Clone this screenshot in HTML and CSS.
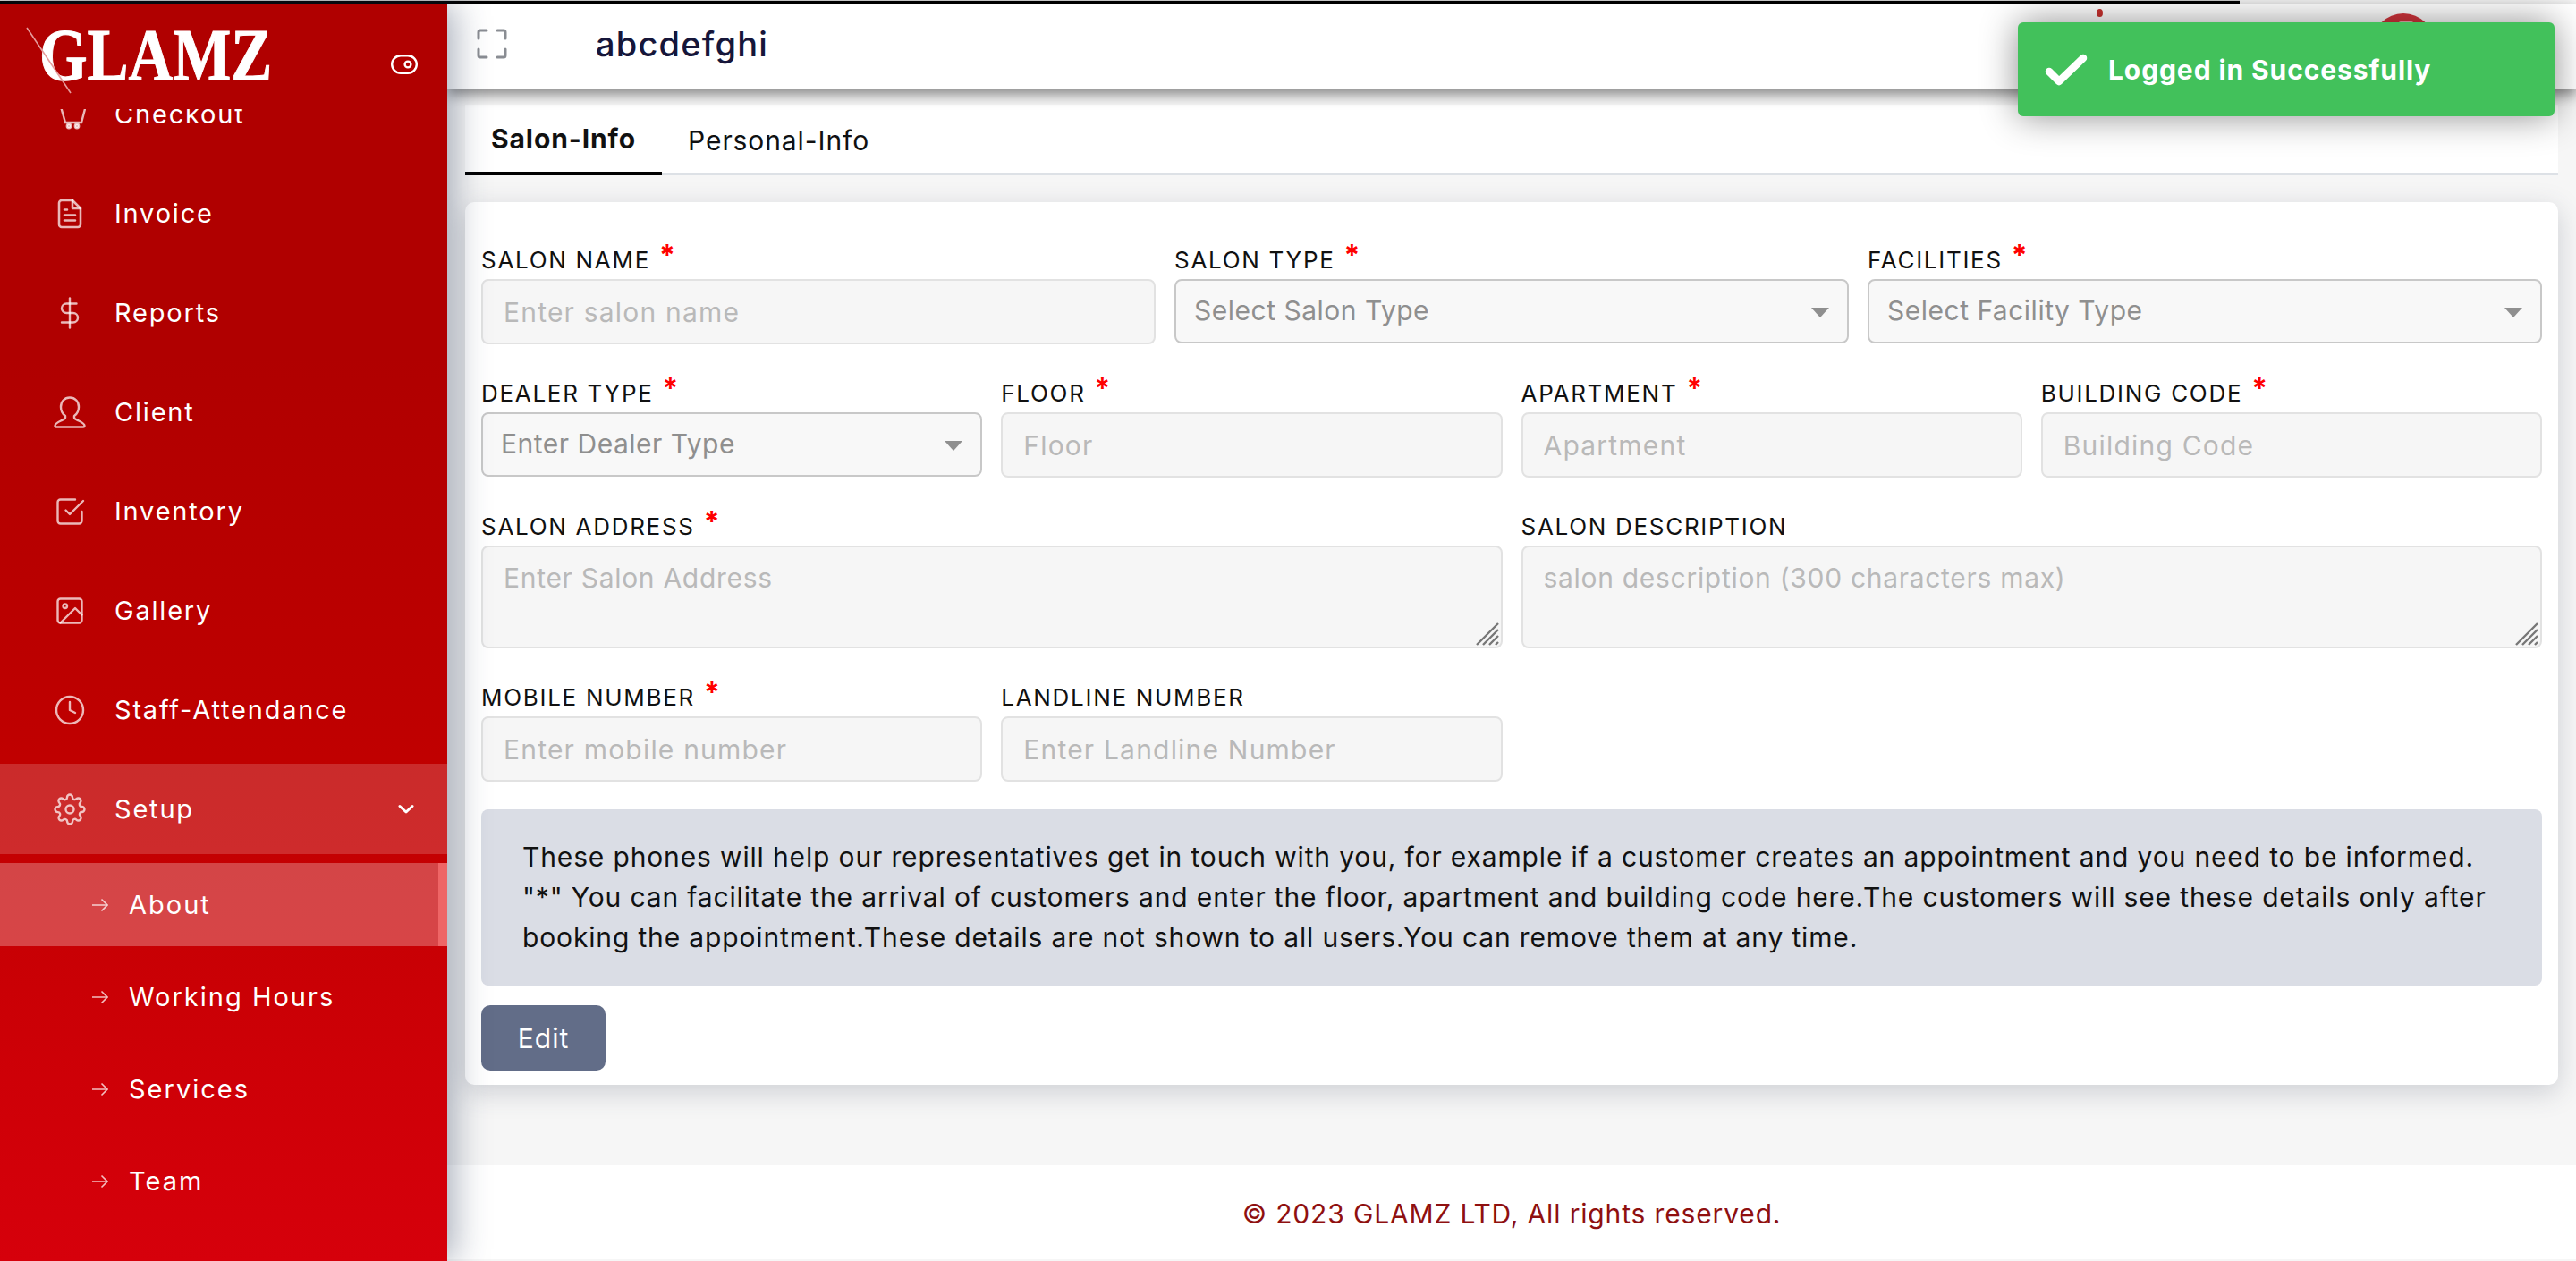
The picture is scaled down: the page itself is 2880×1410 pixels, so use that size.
FILE: index.html
```html
<!DOCTYPE html>
<html lang="en">
<head>
    <meta charset="UTF-8">
    <meta name="viewport" content="width=device-width, initial-scale=1.0">
    <title>Glamz - About</title>
    <link rel="stylesheet" href="styles.css">
</head>
<body>
    <div class="topline"></div>
    <div class="page">
        <aside class="sidebar">
            <div class="brand">
                <div class="logo">
                    <span class="logo-text">GLAMZ</span>
                    <svg class="logo-slash" width="60" height="80" viewBox="0 0 60 80"><path d="M1 1 L50 74" fill="none" stroke="#e59c9c" stroke-width="1.6"/></svg>
                </div>
                <svg class="toggle" width="30" height="22" viewBox="0 0 30 22" fill="none" stroke="#fff" stroke-width="2.4"><rect x="1.2" y="1.2" width="27.6" height="19.6" rx="9.8"/><circle cx="19" cy="11" r="3.4"/></svg>
            </div>
            <nav class="nav">
                <a class="nav-item">
                    <svg class="nav-icon" width="36" height="36" viewBox="0 0 36 36" fill="none" stroke="currentColor" stroke-width="2.4"><path d="M7.6 8 L13 27 H31 L36 8"/><circle cx="17" cy="31" r="2.2" fill="currentColor"/><circle cx="26" cy="31" r="2.2" fill="currentColor"/></svg>
                    <span>Checkout</span>
                </a>
                <a class="nav-item">
                    <svg class="nav-icon" width="36" height="36" viewBox="0 0 24 24" fill="none" stroke="currentColor" stroke-width="1.7" stroke-linecap="round" stroke-linejoin="round"><path d="M14 2H6a2 2 0 0 0-2 2v16a2 2 0 0 0 2 2h12a2 2 0 0 0 2-2V8z"/><path d="M14 2v6h6"/><path d="M16 13H8M16 17H8M10 9H8"/></svg>
                    <span>Invoice</span>
                </a>
                <a class="nav-item">
                    <svg class="nav-icon" width="36" height="36" viewBox="0 0 24 24" fill="none" stroke="currentColor" stroke-width="1.6" stroke-linecap="round" stroke-linejoin="round"><path d="M12 1v22"/><path d="M17 5H9.500a3.500 3.500 0 0 0 0 7h5a3.500 3.500 0 0 1 0 7H6"/></svg>
                    <span>Reports</span>
                </a>
                <a class="nav-item">
                    <svg class="nav-icon" width="36" height="36" viewBox="0 0 36 36" fill="none" stroke="currentColor" stroke-width="2.400" stroke-linejoin="round"><path d="M18 1.500 C12 1.500 8 6 8 12 C8 17 10 20 13 22 L13 24 C13 25.500 11 26 8 27.500 C4 29.500 1.500 31 1.500 33 C1.500 34 2 34.500 3 34.500 H33 C34 34.500 34.500 34 34.500 33 C34.500 31 32 29.500 28 27.500 C25 26 23 25.500 23 24 L23 22 C26 20 28 17 28 12 C28 6 24 1.500 18 1.500 Z"/></svg>
                    <span>Client</span>
                </a>
                <a class="nav-item">
                    <svg class="nav-icon" width="36" height="36" viewBox="0 0 24 24" fill="none" stroke="currentColor" stroke-width="1.6" stroke-linecap="round" stroke-linejoin="round"><path d="M9 11l3 3L22 4"/><path d="M21 12v7a2 2 0 0 1-2 2H5a2 2 0 0 1-2-2V5a2 2 0 0 1 2-2h11"/></svg>
                    <span>Inventory</span>
                </a>
                <a class="nav-item">
                    <svg class="nav-icon" width="36" height="36" viewBox="0 0 24 24" fill="none" stroke="currentColor" stroke-width="1.6" stroke-linecap="round" stroke-linejoin="round"><rect x="3" y="3" width="18" height="18" rx="2"/><circle cx="8.500" cy="8.500" r="1.500"/><path d="M21 15l-5-5L5 21"/></svg>
                    <span>Gallery</span>
                </a>
                <a class="nav-item">
                    <svg class="nav-icon" width="36" height="36" viewBox="0 0 24 24" fill="none" stroke="currentColor" stroke-width="1.6" stroke-linecap="round" stroke-linejoin="round"><circle cx="12" cy="12" r="10"/><path d="M12 6v6l4 2"/></svg>
                    <span>Staff-Attendance</span>
                </a>
                <a class="nav-item nav-open">
                    <svg class="nav-icon" width="36" height="36" viewBox="0 0 24 24" fill="none" stroke="currentColor" stroke-width="1.6" stroke-linecap="round" stroke-linejoin="round"><circle cx="12" cy="12" r="3"/><path d="M19.400 15a1.650 1.650 0 0 0 .33 1.820l.06.06a2 2 0 0 1 0 2.830 2 2 0 0 1-2.830 0l-.06-.06a1.650 1.650 0 0 0-1.820-.33 1.650 1.650 0 0 0-1 1.510V21a2 2 0 0 1-2 2 2 2 0 0 1-2-2v-.09A1.650 1.650 0 0 0 9 19.400a1.650 1.650 0 0 0-1.820.33l-.06.06a2 2 0 0 1-2.830 0 2 2 0 0 1 0-2.830l.06-.06a1.650 1.650 0 0 0 .33-1.820 1.650 1.650 0 0 0-1.510-1H3a2 2 0 0 1-2-2 2 2 0 0 1 2-2h.09A1.650 1.650 0 0 0 4.600 9a1.650 1.650 0 0 0-.33-1.820l-.06-.06a2 2 0 0 1 0-2.830 2 2 0 0 1 2.830 0l.06.06a1.650 1.650 0 0 0 1.820.33H9a1.650 1.650 0 0 0 1-1.510V3a2 2 0 0 1 2-2 2 2 0 0 1 2 2v.09a1.650 1.650 0 0 0 1 1.510 1.650 1.650 0 0 0 1.820-.33l.06-.06a2 2 0 0 1 2.830 0 2 2 0 0 1 0 2.830l-.06.06a1.650 1.650 0 0 0-.33 1.820V9a1.650 1.650 0 0 0 1.510 1H21a2 2 0 0 1 2 2 2 2 0 0 1-2 2h-.09a1.650 1.650 0 0 0-1.510 1z"/></svg>
                    <span>Setup</span>
                    <svg class="chevron" width="18" height="12" viewBox="0 0 18 12" fill="none" stroke="#fff" stroke-width="3" stroke-linecap="round" stroke-linejoin="round"><path d="M2 2.500 L9 9 L16 2.500"/></svg>
                </a>
                <a class="sub-item sub-active">
                    <svg class="sub-icon" width="18" height="16" viewBox="0 0 18 16" fill="none" stroke="currentColor" stroke-width="1.600"><path d="M0 8 H17 M10.500 1.500 L17 8 L10.500 14.500"/></svg>
                    <span>About</span>
                </a>
                <a class="sub-item">
                    <svg class="sub-icon" width="18" height="16" viewBox="0 0 18 16" fill="none" stroke="currentColor" stroke-width="1.600"><path d="M0 8 H17 M10.500 1.500 L17 8 L10.500 14.500"/></svg>
                    <span>Working Hours</span>
                </a>
                <a class="sub-item">
                    <svg class="sub-icon" width="18" height="16" viewBox="0 0 18 16" fill="none" stroke="currentColor" stroke-width="1.600"><path d="M0 8 H17 M10.500 1.500 L17 8 L10.500 14.500"/></svg>
                    <span>Services</span>
                </a>
                <a class="sub-item">
                    <svg class="sub-icon" width="18" height="16" viewBox="0 0 18 16" fill="none" stroke="currentColor" stroke-width="1.600"><path d="M0 8 H17 M10.500 1.500 L17 8 L10.500 14.500"/></svg>
                    <span>Team</span>
                </a>
            </nav>
        </aside>

        <main class="main">
            <header class="topbar">
                <svg class="expand" width="34" height="34" viewBox="0 0 34 34" fill="none" stroke="#8a8d93" stroke-width="3" stroke-linecap="round" stroke-linejoin="round"><path d="M2 11 V4 Q2 2 4 2 H11 M23 2 H30 Q32 2 32 4 V11 M32 23 V30 Q32 32 30 32 H23 M11 32 H4 Q2 32 2 30 V23"/></svg>
                <h1 class="salon-title">abcdefghi</h1>
                <span class="notify-dot"></span>
                <span class="avatar"></span>
            </header>

            <div class="tabs">
                <a class="tab tab-active">Salon-Info</a>
                <a class="tab">Personal-Info</a>
            </div>

            <section class="card">
                <div class="row cols-3">
                    <div class="field">
                        <label>SALON NAME <b class="req">*</b></label>
                        <input type="text" placeholder="Enter salon name">
                    </div>
                    <div class="field">
                        <label>SALON TYPE <b class="req">*</b></label>
                        <div class="select-box">Select Salon Type</div>
                    </div>
                    <div class="field">
                        <label>FACILITIES <b class="req">*</b></label>
                        <div class="select-box">Select Facility Type</div>
                    </div>
                </div>
                <div class="row cols-4">
                    <div class="field">
                        <label>DEALER TYPE <b class="req">*</b></label>
                        <div class="select-box">Enter Dealer Type</div>
                    </div>
                    <div class="field">
                        <label>FLOOR <b class="req">*</b></label>
                        <input type="text" placeholder="Floor">
                    </div>
                    <div class="field">
                        <label>APARTMENT <b class="req">*</b></label>
                        <input type="text" placeholder="Apartment">
                    </div>
                    <div class="field">
                        <label>BUILDING CODE <b class="req">*</b></label>
                        <input type="text" placeholder="Building Code">
                    </div>
                </div>
                <div class="row cols-2">
                    <div class="field">
                        <label>SALON ADDRESS <b class="req">*</b></label>
                        <div class="textarea-wrap">
                            <textarea placeholder="Enter Salon Address"></textarea>
                            <svg class="grip" width="26" height="26" viewBox="0 0 26 26" stroke="#777" stroke-width="2.400"><path d="M1 25 L25 1 M8 25 L25 8 M15 25 L25 15 M22 25 L25 22"/></svg>
                        </div>
                    </div>
                    <div class="field">
                        <label>SALON DESCRIPTION</label>
                        <div class="textarea-wrap">
                            <textarea placeholder="salon description (300 characters max)"></textarea>
                            <svg class="grip" width="26" height="26" viewBox="0 0 26 26" stroke="#777" stroke-width="2.400"><path d="M1 25 L25 1 M8 25 L25 8 M15 25 L25 15 M22 25 L25 22"/></svg>
                        </div>
                    </div>
                </div>
                <div class="row cols-4">
                    <div class="field">
                        <label>MOBILE NUMBER <b class="req">*</b></label>
                        <input type="text" placeholder="Enter mobile number">
                    </div>
                    <div class="field">
                        <label>LANDLINE NUMBER</label>
                        <input type="text" placeholder="Enter Landline Number">
                    </div>
                </div>
                <div class="note">
                    These phones will help our representatives get in touch with you, for example if a customer creates an appointment and you need to be informed.<br>
                    "*" You can facilitate the arrival of customers and enter the floor, apartment and building code here.The customers will see these details only after<br>
                    booking the appointment.These details are not shown to all users.You can remove them at any time.
                </div>
                <button type="button" class="edit-btn">Edit</button>
            </section>

            <footer class="footer">© 2023 GLAMZ LTD, All rights reserved.</footer>
        </main>
    </div>

    <div class="toast">
        <svg width="48" height="36" viewBox="0 0 48 36" fill="none" stroke="#fff" stroke-width="8.500" stroke-linecap="round" stroke-linejoin="round"><path d="M5 20 L16 31 L43 5"/></svg>
        <span>Logged in Successfully</span>
    </div>
</body>
</html>
```

FILE: styles.css
```css
/* Reset */
* {
    margin: 0;
    padding: 0;
    box-sizing: border-box;
}

html, body {
    height: 100%;
    overflow: hidden;
}

body {
    font-family: 'Inter', 'Liberation Sans', sans-serif;
    background-color: #f6f6f6;
    color: #111;
    display: flex;
    flex-direction: column;
}

.topline {
    width: 2504px;
    height: 5px;
    background-color: #000;
    border-top: 1px solid #ccc;
    flex: none;
}

.page {
    flex: 1;
    display: flex;
    min-height: 0;
}

/* Sidebar */
.sidebar {
    width: 500px;
    flex: none;
    background: linear-gradient(180deg, #b00000 0%, #b00000 28%, #c00000 60%, #d6000b 100%);
    box-shadow: 8px 0 36px rgba(40, 55, 85, 0.4);
    position: relative;
    z-index: 2;
    overflow: hidden;
    display: flex;
    flex-direction: column;
}

.brand {
    height: 117px;
    flex: none;
    display: flex;
    align-items: flex-start;
    justify-content: space-between;
    padding: 25px 33px 0 29px;
    background-color: #b00000;
    position: relative;
    z-index: 1;
}

.logo {
    position: relative;
    width: 275px;
    height: 80px;
}

.logo-slash {
    position: absolute;
    left: 0;
    top: 0;
}

.logo-text {
    position: absolute;
    left: 15px;
    top: -9px;
    font-family: 'Liberation Serif', serif;
    font-weight: 700;
    font-size: 82px;
    line-height: 1;
    color: #fff;
    -webkit-text-stroke: 1px #fff;
    transform: scaleX(0.84);
    transform-origin: left top;
}

.toggle {
    margin-top: 31px;
}

.nav {
    display: flex;
    flex-direction: column;
    margin-top: -45px;
    color: #fff;
}

.nav-item,
.sub-item {
    display: flex;
    align-items: center;
    font-size: 29px;
    flex: none;
}

.nav-item {
    height: 101px;
    margin-bottom: 10px;
    padding: 0 37px 0 60px;
    letter-spacing: 1.8px;
}

.nav-icon {
    color: rgba(255, 255, 255, 0.72);
    margin-right: 32px;
    flex: none;
}

.nav-open {
    background-color: rgba(255, 255, 255, 0.17);
}

.chevron {
    margin-left: auto;
}

.sub-item {
    height: 93px;
    margin-bottom: 10px;
    padding-left: 103px;
    letter-spacing: 2px;
}

.sub-icon {
    color: rgba(255, 255, 255, 0.75);
    margin-right: 23px;
    flex: none;
}

.sub-active {
    background-color: rgba(255, 255, 255, 0.27);
    border-right: 10px solid #ee6666;
}

/* Main column */
.main {
    flex: 1;
    min-width: 0;
    display: flex;
    flex-direction: column;
}

.topbar {
    height: 95px;
    flex: none;
    background-color: #fff;
    box-shadow: 0 6px 14px rgba(0, 0, 0, 0.45);
    display: flex;
    align-items: center;
    padding: 0 0 8px 33px;
    position: relative;
    z-index: 1;
}

.salon-title {
    font-size: 38px;
    font-weight: 500;
    letter-spacing: 1.2px;
    color: #16163a;
    margin-left: 99px;
}

.notify-dot {
    position: absolute;
    left: 1844px;
    top: 5px;
    width: 7px;
    height: 9px;
    border-radius: 50%;
    background-color: #c8322f;
}

.avatar {
    position: absolute;
    left: 2152px;
    top: 10px;
    width: 70px;
    height: 70px;
    border-radius: 50%;
    background-color: #d2343c;
}

.avatar::after {
    content: "";
    position: absolute;
    left: 20px;
    top: 8px;
    width: 30px;
    height: 30px;
    border-radius: 50%;
    border: 3px solid #eab4b4;
}

.tabs {
    margin: 17px 20px 0;
    height: 79px;
    flex: none;
    background-color: #fff;
    border-bottom: 2px solid #dde1e6;
    display: flex;
}

.tab {
    font-size: 30px;
    letter-spacing: 0.9px;
    padding: 0 29px;
    display: flex;
    align-items: center;
    height: 79px;
}

.tab-active {
    font-weight: 700;
    border-bottom: 4px solid #000;
}

/* Form card */
.card {
    margin: 30px 20px 0;
    padding: 38px 18px 18px;
    background-color: #fff;
    border-radius: 10px;
    box-shadow: 0 8px 30px rgba(60, 70, 90, 0.22);
    height: 987px;
    flex: none;
}

.row {
    display: grid;
    gap: 21px;
    margin-bottom: 28px;
}

.cols-2 { grid-template-columns: repeat(2, 1fr); }
.cols-3 { grid-template-columns: repeat(3, 1fr); }
.cols-4 { grid-template-columns: repeat(4, 1fr); }

.field label {
    display: block;
    height: 48px;
    padding-top: 11px;
    font-size: 26px;
    line-height: 32px;
    letter-spacing: 1.7px;
    color: #111;
}

.req {
    font-size: 32px;
    line-height: 0;
    color: #f00;
    position: relative;
    top: -3px;
    margin-left: 1px;
}

.field input,
.field textarea {
    display: block;
    width: 100%;
    height: 73px;
    padding: 0 23px;
    font-family: inherit;
    font-size: 30px;
    letter-spacing: 1.2px;
    background-color: #f6f6f6;
    border: 2px solid #e2e2e2;
    border-radius: 8px;
    outline: none;
}

.textarea-wrap {
    position: relative;
}

.field textarea {
    height: 115px;
    padding-top: 16px;
    letter-spacing: 0.7px;
    resize: none;
}

.grip {
    position: absolute;
    right: 4px;
    bottom: 3px;
}

.field input::placeholder,
.field textarea::placeholder {
    color: #b9b9b9;
}

.select-box {
    height: 72px;
    display: flex;
    align-items: center;
    padding: 0 20px 2px;
    font-size: 30px;
    letter-spacing: 0.5px;
    color: #8f8f8f;
    background-color: #f8f8f8;
    border: 2px solid #c8c8c8;
    border-radius: 8px;
    position: relative;
}

.select-box::after {
    content: "";
    position: absolute;
    right: 20px;
    top: 30px;
    border-left: 10px solid transparent;
    border-right: 10px solid transparent;
    border-top: 11px solid #8f8f8f;
}

.note {
    margin-top: 31px;
    background-color: #dadde5;
    border-radius: 8px;
    padding: 31px 46px;
    font-size: 30px;
    letter-spacing: 0.85px;
    line-height: 45px;
    color: #111;
    white-space: nowrap;
}

.edit-btn {
    display: block;
    margin-top: 22px;
    width: 139px;
    height: 73px;
    background-color: #626d88;
    color: #fff;
    border: none;
    border-radius: 10px;
    font-family: inherit;
    font-size: 30px;
    letter-spacing: 1px;
}

.footer {
    margin-top: auto;
    height: 105px;
    margin-bottom: 2px;
    padding-top: 3px;
    flex: none;
    background-color: #fff;
    display: flex;
    align-items: center;
    justify-content: center;
    font-size: 30px;
    letter-spacing: 0.85px;
    color: #8f1010;
}

/* Toast */
.toast {
    position: absolute;
    left: 2256px;
    top: 25px;
    width: 600px;
    height: 105px;
    background-color: #42c15b;
    border-radius: 6px;
    box-shadow: 0 0 40px rgba(0, 0, 0, 0.45);
    display: flex;
    align-items: center;
    padding-left: 30px;
    gap: 23px;
    color: #fff;
    font-size: 30px;
    letter-spacing: 0.9px;
    font-weight: 700;
    z-index: 5;
}
```
